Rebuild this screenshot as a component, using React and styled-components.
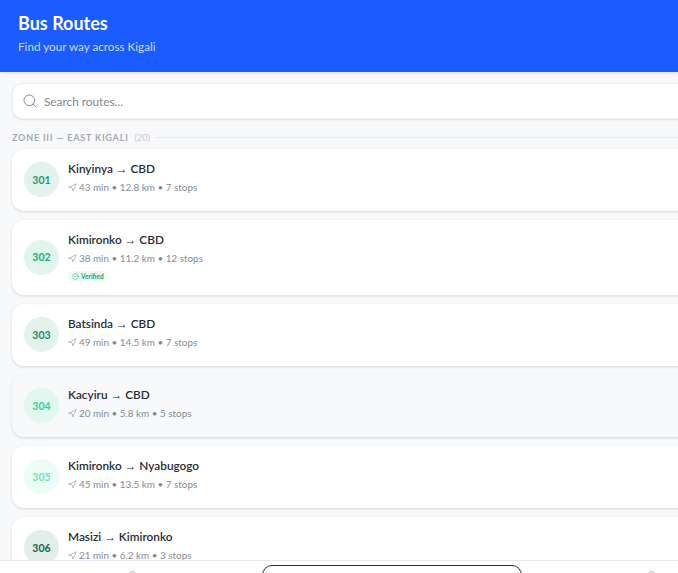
import React from "react";
import styled, { createGlobalStyle } from "styled-components";
import { Search, Navigation, CircleCheck } from "lucide-react";

const GlobalStyle = createGlobalStyle`
  html, body {
    margin: 0;
    height: 100%;
    overflow: hidden;
    background: #f8f9fb;
    font-family: Lato, "Noto Sans", sans-serif;
  }
`;

const Page = styled.div`
  width: 678px;
  height: 573px;
  overflow: hidden;
`;

const Header = styled.header`
  height: 72px;
  box-sizing: border-box;
  padding: 11px 18px 0;
  background: #1a5cff;
  box-shadow: 0 1px 4px rgba(0, 0, 0, 0.12);
`;

const Title = styled.h1`
  margin: 0;
  font-size: 18px;
  line-height: 24px;
  font-weight: 700;
  color: #fff;
`;

const Subtitle = styled.p`
  margin: 2px 0 0;
  font-size: 11.7px;
  line-height: 18px;
  color: #c8d9ff;
`;

const Content = styled.main`
  width: 760px;
  box-sizing: border-box;
  padding: 11px 12px 0;
`;

const SearchBox = styled.div`
  display: flex;
  align-items: center;
  gap: 6px;
  height: 36px;
  box-sizing: border-box;
  padding: 0 9px;
  background: #fff;
  border: 1px solid #eceef1;
  border-radius: 10px;
  box-shadow: 0 1px 2px rgba(0, 0, 0, 0.1);
  color: #7d8490;
  font-size: 11.8px;
`;

const SectionHead = styled.div`
  display: flex;
  align-items: center;
  gap: 6px;
  height: 14px;
  margin: 11px 0 5px;
  font-size: 9px;
  font-weight: 700;
  letter-spacing: 0.8px;
  color: #a4a9b3;
`;

const Count = styled.span`
  font-weight: 400;
  letter-spacing: 0;
  color: #c6cad1;
`;

const Rule = styled.span`
  flex: 1;
  height: 1px;
  background: #e9ebef;
`;

const RouteList = styled.div`
  display: flex;
  flex-direction: column;
  gap: 9px;
`;

const Card = styled.article`
  display: flex;
  align-items: center;
  gap: 9px;
  min-height: 62px;
  box-sizing: border-box;
  padding: 11px 12px 12px;
  background: ${(p) => (p.$muted ? "#f8f9fb" : "#fff")};
  border-radius: 12px;
  box-shadow: 0 1px 3px rgba(0, 0, 0, 0.14);
`;

const Badge = styled.div`
  flex: none;
  display: flex;
  align-items: center;
  justify-content: center;
  width: 35px;
  height: 35px;
  border-radius: 50%;
  background: ${(p) => p.$bg};
  color: ${(p) => p.$fg};
  font-size: 10.5px;
  font-weight: 700;
`;

const Info = styled.div`
  align-self: flex-start;
`;

const RouteName = styled.div`
  font-size: 11.8px;
  line-height: 18px;
  font-weight: 600;
  color: #262b36;
`;

const Arrow = styled.span`
  font-family: Roboto, sans-serif;
  font-weight: 400;
`;

const Meta = styled.div`
  display: flex;
  align-items: center;
  gap: 2px;
  font-size: 9.9px;
  line-height: 18px;
  color: #858b96;
`;

const Verified = styled.span`
  display: flex;
  align-items: center;
  gap: 2px;
  width: fit-content;
  margin-top: 4px;
  margin-bottom: 1px;
  padding: 0 4px;
  height: 11px;
  border-radius: 6px;
  background: #ecfbf4;
  color: #12a56e;
  font-size: 6.5px;
  font-weight: 700;
`;

const BottomNav = styled.nav`
  position: fixed;
  left: 0;
  right: 0;
  bottom: 0;
  height: 12px;
  background: #fff;
  border-top: 1px solid #e6e8ec;
`;

const ActiveTab = styled.div`
  position: absolute;
  left: 262px;
  top: 4px;
  width: 260px;
  height: 30px;
  box-sizing: border-box;
  border: 1.5px solid #2b2f36;
  border-radius: 10px;
`;

const NavDot = styled.span`
  position: absolute;
  left: ${(p) => p.$x}px;
  top: 10px;
  width: 5px;
  height: 5px;
  border-radius: 50%;
  border: 1px solid #b4b9c1;
`;

const routes = [
  { id: 301, from: "Kinyinya", to: "CBD", meta: "43 min • 12.8 km • 7 stops", bg: "#e3f3ec", fg: "#229a6c" },
  { id: 302, from: "Kimironko", to: "CBD", meta: "38 min • 11.2 km • 12 stops", bg: "#e0f6ed", fg: "#16b07a", verified: true },
  { id: 303, from: "Batsinda", to: "CBD", meta: "49 min • 14.5 km • 7 stops", bg: "#e3f3ec", fg: "#1c8c62" },
  { id: 304, from: "Kacyiru", to: "CBD", meta: "20 min • 5.8 km • 5 stops", bg: "#e0f8ee", fg: "#34d399", muted: true },
  { id: 305, from: "Kimironko", to: "Nyabugogo", meta: "45 min • 13.5 km • 7 stops", bg: "#ecfdf6", fg: "#6ee7b7" },
  { id: 306, from: "Masizi", to: "Kimironko", meta: "21 min • 6.2 km • 3 stops", bg: "#e2efe9", fg: "#11694a" },
];

export default function App() {
  return (
    <Page>
      <GlobalStyle />
      <Header>
        <Title>Bus Routes</Title>
        <Subtitle>Find your way across Kigali</Subtitle>
      </Header>
      <Content>
        <SearchBox>
          <Search size={16} strokeWidth={1.5} color="#858b96" />
          Search routes...
        </SearchBox>
        <SectionHead>
          ZONE III — EAST KIGALI <Count>(20)</Count>
          <Rule />
        </SectionHead>
        <RouteList>
          {routes.map((r) => (
            <Card key={r.id} $muted={r.muted}>
              <Badge $bg={r.bg} $fg={r.fg}>{r.id}</Badge>
              <Info>
                <RouteName>{r.from} <Arrow>→</Arrow> {r.to}</RouteName>
                <Meta>
                  <Navigation size={9} strokeWidth={1.5} />
                  {r.meta}
                </Meta>
                {r.verified && (
                  <Verified>
                    <CircleCheck size={7} strokeWidth={1.5} />
                    Verified
                  </Verified>
                )}
              </Info>
            </Card>
          ))}
        </RouteList>
      </Content>
      <BottomNav>
        <NavDot $x={129} />
        <ActiveTab />
        <NavDot $x={648} />
      </BottomNav>
    </Page>
  );
}
